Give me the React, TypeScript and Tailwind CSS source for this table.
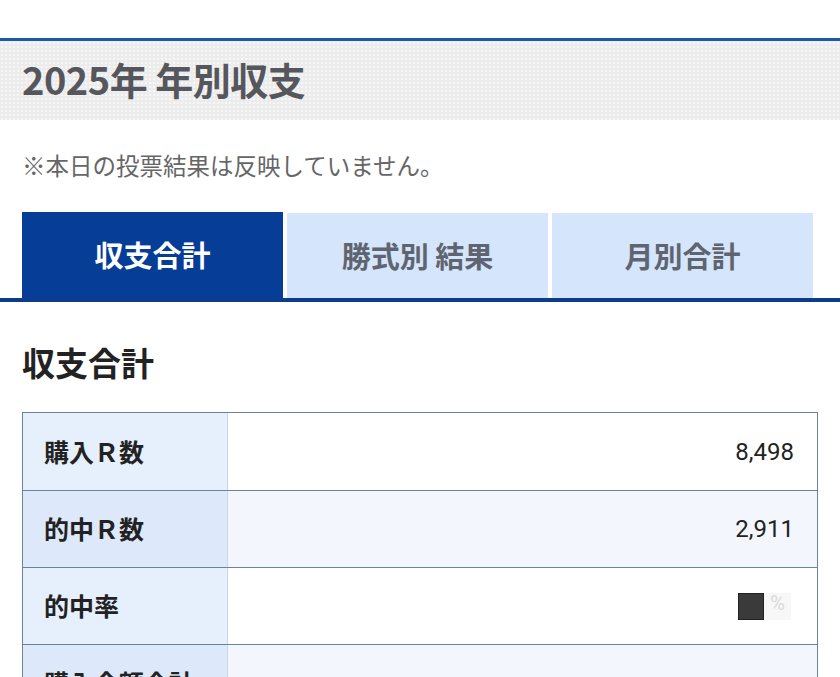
import React from "react";

const rows = [
  { label: "購入Ｒ数", value: "8,498", leftBg: "bg-[#e6effc]", rightBg: "bg-white" },
  { label: "的中Ｒ数", value: "2,911", leftBg: "bg-[#dde9fb]", rightBg: "bg-[#f3f7fd]" },
  { label: "的中率", value: null, leftBg: "bg-[#e6effc]", rightBg: "bg-white" },
  { label: "購入金額合計", value: "", leftBg: "bg-[#dde9fb]", rightBg: "bg-[#f3f7fd]" },
];

export default function App() {
  return (
    <div
      className="w-[840px] h-[677px] overflow-hidden bg-white"
      style={{ fontFamily: '"Noto Sans CJK JP", "Noto Sans", sans-serif' }}
    >
      <div className="h-[38px]" />
      <div className="border-t-[3px] border-[#1b5aa6] h-[82px] bg-[#ececec] bg-[radial-gradient(#f7f7f7_1px,transparent_1px)] bg-[length:4px_4px] flex items-center px-[22px]">
        <h1 className="text-[38px] font-bold text-[#55575c] leading-none tracking-[-0.5px] -mt-[4px]">
          2025年 年別収支
        </h1>
      </div>
      <p className="mt-[29px] px-[22px] text-[23.5px] leading-[32px] text-[#666]">
        ※本日の投票結果は反映していません。
      </p>
      <div className="mt-[31px] flex gap-[4px] pl-[22px] pr-[27px] border-b-4 border-[#0d3d8a]">
        <div className="flex-1 h-[86px] bg-[#063d97] flex items-center justify-center text-white text-[29px] font-bold">
          収支合計
        </div>
        <div className="flex-1 h-[85px] mt-[1px] bg-[#d5e5fb] flex items-center justify-center text-[#5f6570] text-[29px] font-bold">
          勝式別 結果
        </div>
        <div className="flex-1 h-[85px] mt-[1px] bg-[#d5e5fb] flex items-center justify-center text-[#5f6570] text-[29px] font-bold">
          月別合計
        </div>
      </div>
      <h2 className="mt-[40px] px-[22px] text-[33px] leading-[40px] font-bold text-[#222]">
        収支合計
      </h2>
      <div className="mt-[30px] mx-[22px] border border-[#6a8499]">
        {rows.map((r, i) => (
          <div
            key={i}
            className={`flex h-[77px] ${i > 0 ? "border-t border-[#6a8499]" : ""}`}
          >
            <div
              className={`w-[205px] shrink-0 ${r.leftBg} border-r border-[#c9d8e8] flex items-center pl-[21px] text-[25px] font-bold text-[#222]`}
            >
              {r.label}
            </div>
            <div
              className={`flex-1 ${r.rightBg} flex items-center justify-end pr-[23px] text-[24px] text-[#222]`}
              style={{ fontFamily: 'Roboto, "Noto Sans", sans-serif' }}
            >
              {r.value === null ? (
                <div className="flex items-center mr-[3px]">
                  <div className="w-[26px] h-[27px] bg-[#3a3a3a] border border-[#222]" />
                  <div className="w-[27px] h-[27px] bg-[#f7f7f7] text-[#dadada] text-[20px] leading-[20px] flex justify-center">
                    %
                  </div>
                </div>
              ) : (
                r.value
              )}
            </div>
          </div>
        ))}
      </div>
    </div>
  );
}
